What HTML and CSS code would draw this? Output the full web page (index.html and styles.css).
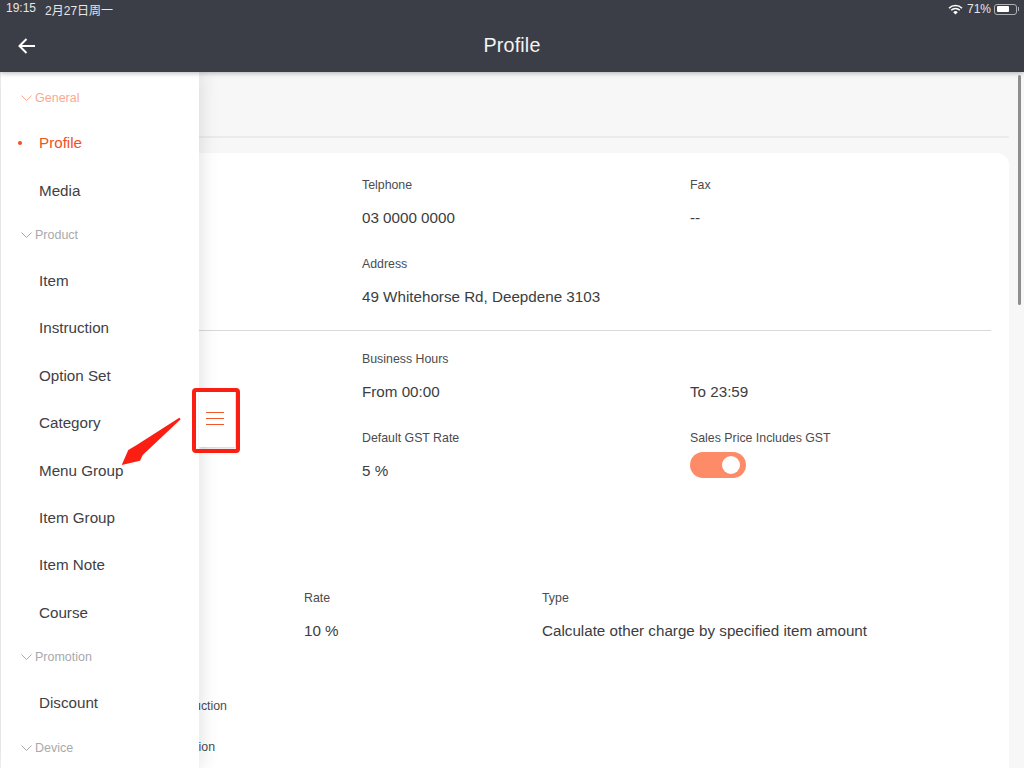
FILE: index.html
```html
<!DOCTYPE html>
<html lang="en">
<head>
<meta charset="utf-8">
<title>Profile</title>
<link rel="stylesheet" href="styles.css">
</head>
<body>
<div class="app">
  <header class="topbar">
    <div class="status">
      <span class="status-time"><span>19:15</span><span>2月27日周一</span></span>
      <span class="status-right">
        <svg class="wifi" width="15" height="11" viewBox="0 0 15 11"><path d="M1 4.200a9.200 9.200 0 0 1 13 0" fill="none" stroke="#fff" stroke-width="1.6"/><path d="M3.200 6.300a6 6 0 0 1 8.600 0" fill="none" stroke="#fff" stroke-width="1.6"/><path d="M7.500 10.600 5.200 8.200a3.200 3.200 0 0 1 4.600 0z" fill="#fff"/></svg>
        <span>71%</span>
        <span class="battery"><span class="battery-level"></span></span><span class="battery-cap"></span>
      </span>
    </div>
    <div class="navbar">
      <svg class="back" width="18" height="16" viewBox="0 0 18 16"><path d="M17 8H2M8.500 1 1.500 8l7 7" fill="none" stroke="#fff" stroke-width="2"/></svg>
      <h1 class="title">Profile</h1>
    </div>
  </header>

  <main class="page">
    <div class="page-head"></div>
    <section class="card">
      <div class="grid">
        <div class="field"></div>
        <div class="field"><div class="label">Telphone</div><div class="value">03 0000 0000</div></div>
        <div class="field"><div class="label">Fax</div><div class="value">--</div></div>
        <div class="field"></div>
        <div class="field wide"><div class="label">Address</div><div class="value">49 Whitehorse Rd, Deepdene 3103</div></div>
      </div>
      <hr class="divider">
      <div class="grid">
        <div class="field"></div>
        <div class="field"><div class="label">Business Hours</div><div class="value">From 00:00</div></div>
        <div class="field"><div class="label">&nbsp;</div><div class="value">To 23:59</div></div>
        <div class="field"></div>
        <div class="field"><div class="label">Default GST Rate</div><div class="value">5 %</div></div>
        <div class="field"><div class="label">Sales Price Includes GST</div><div class="toggle"><span class="knob"></span></div></div>
      </div>
      <div class="charges">
        <div class="field"></div>
        <div class="field"><div class="label">Rate</div><div class="value">10 %</div></div>
        <div class="field"><div class="label">Type</div><div class="value">Calculate other charge by specified item amount</div></div>
      </div>
      <div class="options">
        <div class="option option-long"><span>Deduction</span></div>
        <div class="option option-short"><span>Promotion</span></div>
      </div>
    </section>
    <div class="scrollbar"></div>
  </main>

  <aside class="sidebar">
    <div class="nav-head active"><svg class="chev" width="11" height="6" viewBox="0 0 11 6"><path d="M.5.500l5 5 5-5" fill="none" stroke="currentColor"/></svg>General</div>
    <a class="nav-item current">Profile</a>
    <a class="nav-item">Media</a>
    <div class="nav-head"><svg class="chev" width="11" height="6" viewBox="0 0 11 6"><path d="M.5.500l5 5 5-5" fill="none" stroke="currentColor"/></svg>Product</div>
    <a class="nav-item">Item</a>
    <a class="nav-item">Instruction</a>
    <a class="nav-item">Option Set</a>
    <a class="nav-item">Category</a>
    <a class="nav-item">Menu Group</a>
    <a class="nav-item">Item Group</a>
    <a class="nav-item">Item Note</a>
    <a class="nav-item">Course</a>
    <div class="nav-head"><svg class="chev" width="11" height="6" viewBox="0 0 11 6"><path d="M.5.500l5 5 5-5" fill="none" stroke="currentColor"/></svg>Promotion</div>
    <a class="nav-item">Discount</a>
    <div class="nav-head"><svg class="chev" width="11" height="6" viewBox="0 0 11 6"><path d="M.5.500l5 5 5-5" fill="none" stroke="currentColor"/></svg>Device</div>
  </aside>

  <div class="drawer-tab"><span class="bar"></span><span class="bar"></span><span class="bar"></span></div>
  <div class="callout"></div>
  <svg class="arrow" width="64" height="52" viewBox="0 0 64 52"><path d="M59.300 1.700 16.700 29 8.300 34 1.700 49 20 44.700 22.700 39 60.700 3.300z" fill="#fb1f13"/></svg>
</div>
</body>
</html>
```
FILE: styles.css
```css
* { box-sizing: border-box; }
html, body { margin: 0; height: 100%; overflow: hidden; }
body { font-family: "Liberation Sans", "Noto Sans CJK SC", Arial, sans-serif; color: #3f4044; }
.app { position: relative; width: 1024px; height: 768px; overflow: hidden; background: #f7f7f7; }

.topbar { position: relative; z-index: 3; height: 72px; background: #3c3e47; color: #fff; box-shadow: 0 1px 5px rgba(0,0,0,.3); }
.status { display: flex; justify-content: space-between; align-items: center; height: 18px; padding: 0 5px 0 6px; font-size: 12px; color: #e6e6e8; }
.status-time { display: flex; gap: 9px; }
.status-right { display: flex; align-items: center; gap: 3px; }
.wifi { margin-right: 1px; }
.battery { display: flex; width: 23px; height: 11px; padding: 1.5px; border: 1px solid #aeb0b4; border-radius: 3px; }
.battery-level { width: 71%; background: #fff; border-radius: 1px; }
.battery-cap { width: 1px; height: 4px; margin-left: -2px; background: #aeb0b4; }
.navbar { position: relative; display: flex; align-items: center; justify-content: center; height: 54px; }
.back { position: absolute; left: 18px; top: 20px; }
.title { margin: 0; font-size: 19.700px; font-weight: 400; color: #f4f4f5; letter-spacing: .2px; }

.page { position: relative; height: 696px; padding: 0 15px 0 16px; }
.page-head { height: 66px; border-bottom: 2px solid #ebebeb; }
.card { margin-top: 15px; height: 640px; padding: 19px 18px; background: #fff; border-radius: 12px; }
.grid { display: grid; grid-template-columns: 328px 328px 1fr; row-gap: 23px; }
.label { height: 20px; font-size: 12.350px; line-height: 27px; color: #4a4b50; }
.value { margin-top: 16px; font-size: 15.200px; line-height: 20px; color: #3c3d41; }
.divider { margin: 23px 0 15px; border: 0; border-top: 1px solid #d9d9d9; }
.toggle { display: flex; justify-content: flex-end; align-items: center; width: 56px; height: 26px; margin-top: 7px; padding-right: 6px; border-radius: 13px; background: #fe8b68; }
.knob { width: 18px; height: 18px; border-radius: 50%; background: #fff; }
.charges { display: grid; grid-template-columns: 270px 238px 1fr; margin-top: 104px; }
.options { margin-top: 45px; margin-left: 165px; font-size: 12.350px; line-height: 41px; color: #4a4b50; }
.option { display: flex; justify-content: flex-end; overflow: hidden; white-space: nowrap; }
.option-long { width: 28px; }
.option-short { width: 16px; }

.scrollbar { position: absolute; top: 3px; left: 1018px; width: 3px; height: 230px; background: #8e8e8e; border-radius: 2px; }

.sidebar { position: absolute; z-index: 2; top: 72px; left: 1px; bottom: 0; width: 198px; padding-top: 4px; background: #fff; box-shadow: 0 0 20px rgba(0,0,0,.14); overflow: hidden; }
.nav-head { display: flex; align-items: center; gap: 3px; height: 43px; padding-left: 20px; font-size: 12.500px; color: #a9a9ab; }
.nav-head.active { color: #f6ab93; }
.nav-item { position: relative; display: flex; align-items: center; height: 47.400px; padding-left: 38px; font-size: 15.200px; color: #3f4044; }
.nav-item.current { color: #f1501f; }
.nav-item.current::before { content: ""; position: absolute; left: 17px; top: 22px; width: 4px; height: 4px; border-radius: 50%; background: #f1501f; }

.drawer-tab { position: absolute; z-index: 2; top: 390px; left: 199px; display: flex; flex-direction: column; justify-content: center; gap: 4.700px; width: 36px; height: 57px; padding-left: 7px; background: #fff; box-shadow: 1px 1px 3px rgba(0,0,0,.2); }
.bar { width: 18px; height: 1.500px; background: #ee5a2a; }
.callout { position: absolute; z-index: 4; top: 388px; left: 191.500px; width: 48px; height: 65px; border: 4px solid #fb1f13; border-radius: 4px; }
.arrow { position: absolute; z-index: 4; top: 416px; left: 120px; }
```
